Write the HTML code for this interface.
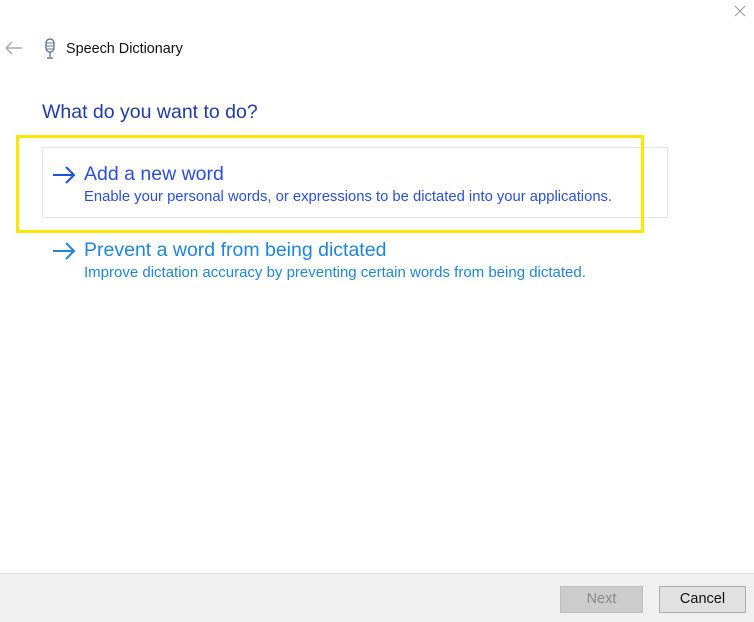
<!DOCTYPE html>
<html><head><style>
body{margin:0;width:754px;height:621px;background:#fff;position:relative;overflow:hidden;font-family:"Liberation Sans",sans-serif}
.a{position:absolute;white-space:nowrap}
</style></head><body>
<svg class="a" style="left:734px;top:5px" width="12" height="12"><path d="M1 1L11 11M11 1L1 11" stroke="#999" stroke-width="1.1"/></svg>
<svg class="a" style="left:5px;top:41px" width="18" height="14"><path d="M1 7H17M1 7L7 1M1 7L7 13" stroke="#aaa" stroke-width="1.5" fill="none"/></svg>
<svg class="a" style="left:43px;top:38px" width="14" height="22"><rect x="3" y="1" width="8" height="13" rx="4" fill="#fff" stroke="#6a7a94" stroke-width="1.4"/><path d="M3 5h8M3 8h8M3 11h8" stroke="#6a7a94"/><path d="M7 14v5M4 20h6" stroke="#6a7a94" stroke-width="1.4"/></svg>
<div class="a" style="left:66px;top:41px;font-size:14.4px;color:#111">Speech Dictionary</div>
<div class="a" style="left:42px;top:101px;font-size:19.5px;color:#1d3ca6">What do you want to do?</div>
<div class="a" style="left:42px;top:147px;width:624px;height:69px;border:1px solid #e4e4e4"></div>
<div class="a" style="left:16px;top:135px;width:622px;height:92px;border:3px solid #ffe600"></div>
<svg class="a" style="left:52px;top:166px" width="24" height="18"><path d="M1 9H22M14 1L22 9L14 17" stroke="#2050e0" stroke-width="2" fill="none"/></svg>
<div class="a" style="left:84px;top:163px;font-size:19.5px;color:#2a4fe0">Add a new word</div>
<div class="a" style="left:84px;top:189px;font-size:14.8px;color:#2a4fe0">Enable your personal words, or expressions to be dictated into your applications.</div>
<svg class="a" style="left:52px;top:242px" width="24" height="18"><path d="M1 9H22M14 1L22 9L14 17" stroke="#1e86de" stroke-width="2" fill="none"/></svg>
<div class="a" style="left:84px;top:239px;font-size:19.5px;color:#1e86de">Prevent a word from being dictated</div>
<div class="a" style="left:84px;top:264px;font-size:15px;color:#1e86de">Improve dictation accuracy by preventing certain words from being dictated.</div>
<div class="a" style="left:0;top:573px;width:754px;height:48px;background:#f0f0f0;border-top:1px solid #dfdfdf"></div>
<div class="a" style="left:560px;top:586px;width:81px;height:25px;background:#cccccc;border:1px solid #bfbfbf;color:#8a8a8a;font-size:14.5px;text-align:center;line-height:25px">Next</div>
<div class="a" style="left:659px;top:586px;width:85px;height:25px;background:#e1e1e1;border:1px solid #adadad;color:#111;font-size:14.5px;text-align:center;line-height:25px">Cancel</div>
</body></html>
